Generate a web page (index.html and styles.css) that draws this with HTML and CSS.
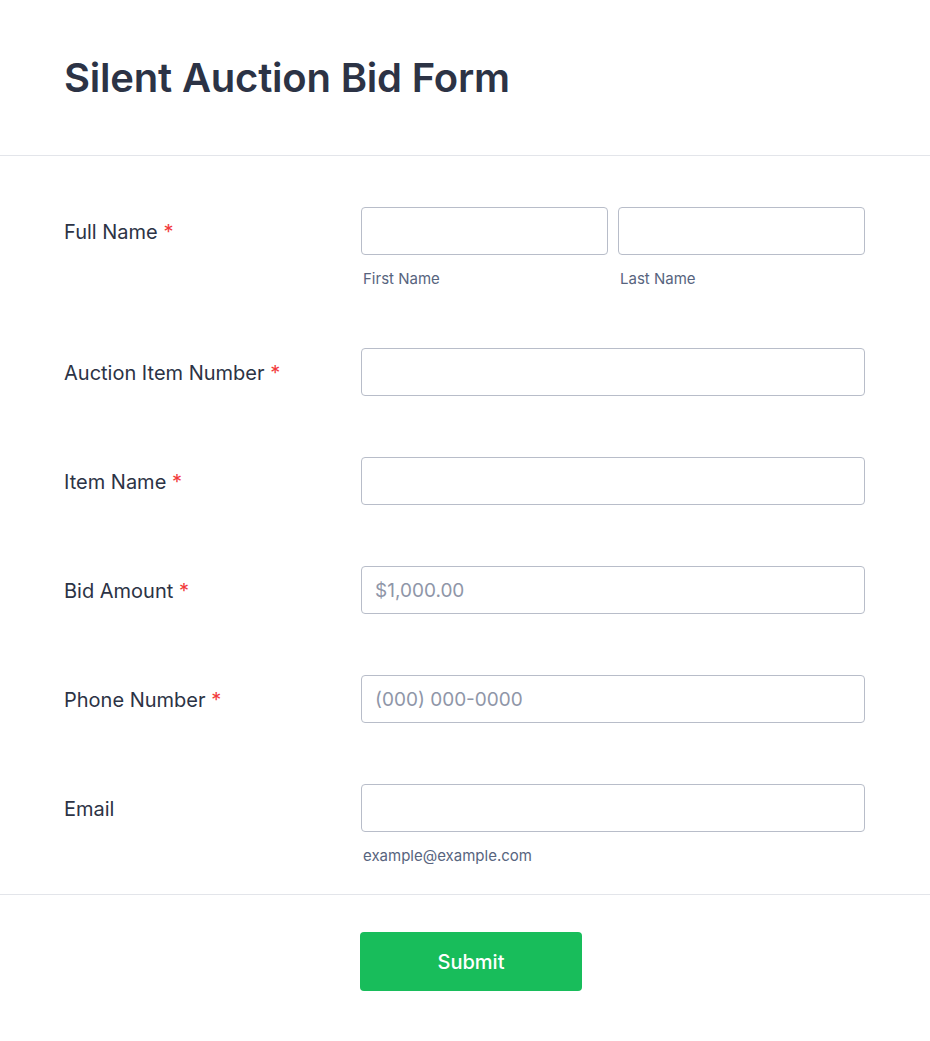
FILE: index.html
```html
<!DOCTYPE html>
<html lang="en">
<head>
    <meta charset="UTF-8">
    <meta name="viewport" content="width=device-width, initial-scale=1.0">
    <title>Silent Auction Bid Form</title>
    <link rel="stylesheet" href="styles.css">
</head>
<body>
    <div class="form-header">
        <h1>Silent Auction Bid Form</h1>
    </div>
    <form class="form-body">
        <div class="form-line">
            <label class="form-label">Full Name <span class="required">*</span></label>
            <div class="form-field two-col">
                <div class="sub-field">
                    <input type="text" class="form-input">
                    <span class="sub-label">First Name</span>
                </div>
                <div class="sub-field">
                    <input type="text" class="form-input">
                    <span class="sub-label">Last Name</span>
                </div>
            </div>
        </div>
        <div class="form-line">
            <label class="form-label">Auction Item Number <span class="required">*</span></label>
            <div class="form-field">
                <input type="text" class="form-input">
            </div>
        </div>
        <div class="form-line">
            <label class="form-label">Item Name <span class="required">*</span></label>
            <div class="form-field">
                <input type="text" class="form-input">
            </div>
        </div>
        <div class="form-line">
            <label class="form-label">Bid Amount <span class="required">*</span></label>
            <div class="form-field">
                <input type="text" class="form-input" placeholder="$1,000.00">
            </div>
        </div>
        <div class="form-line">
            <label class="form-label">Phone Number <span class="required">*</span></label>
            <div class="form-field">
                <input type="tel" class="form-input" placeholder="(000) 000-0000">
            </div>
        </div>
        <div class="form-line">
            <label class="form-label">Email</label>
            <div class="form-field">
                <input type="email" class="form-input">
                <span class="sub-label">example@example.com</span>
            </div>
        </div>
    </form>
    <div class="form-footer">
        <button type="button" class="submit-button">Submit</button>
    </div>
</body>
</html>
```

FILE: styles.css
```css
body {
    font-family: Inter, 'Noto Sans', sans-serif;
    background-color: #fff;
    color: #2c3345;
    margin: 0;
    padding: 0;
}

.form-header {
    height: 155px;
    padding: 0 64px;
    display: flex;
    align-items: center;
    border-bottom: 1px solid #e3e5ea;
}

.form-header h1 {
    margin: 0;
    font-size: 40px;
    font-weight: 600;
    letter-spacing: -0.2px;
    color: #2c3345;
}

.form-body {
    display: flex;
    flex-direction: column;
    gap: 61px;
    padding: 51px 64px 30px;
    border-bottom: 1px solid #e3e5ea;
}

.form-line {
    display: flex;
    align-items: flex-start;
}

.form-label {
    box-sizing: border-box;
    width: 297px;
    height: 48px;
    flex-shrink: 0;
    padding-top: 2px;
    font-size: 20px;
    line-height: 46px;
    font-weight: 400;
}

.required {
    color: #f23a3c;
}

.form-field {
    width: 504px;
    display: flex;
    flex-direction: column;
}

.two-col {
    flex-direction: row;
    gap: 10px;
}

.sub-field {
    flex: 1;
    display: flex;
    flex-direction: column;
}

.form-input {
    box-sizing: border-box;
    width: 100%;
    height: 48px;
    padding: 0 13px;
    border: 1px solid #b8bdc9;
    border-radius: 4px;
    font-family: inherit;
    font-size: 19px;
    color: #2c3345;
    background-color: #fff;
}

.form-input::placeholder {
    color: #8f96a8;
}

.sub-label {
    margin-top: 15px;
    padding-left: 2px;
    font-size: 15px;
    line-height: 17px;
    color: #57647e;
}

.form-footer {
    padding: 37px 64px 50px 360px;
}

.submit-button {
    width: 222px;
    height: 59px;
    border: none;
    border-radius: 4px;
    background-color: #18bd5b;
    color: #fff;
    font-family: inherit;
    font-size: 20px;
    font-weight: 500;
    cursor: pointer;
}
```
